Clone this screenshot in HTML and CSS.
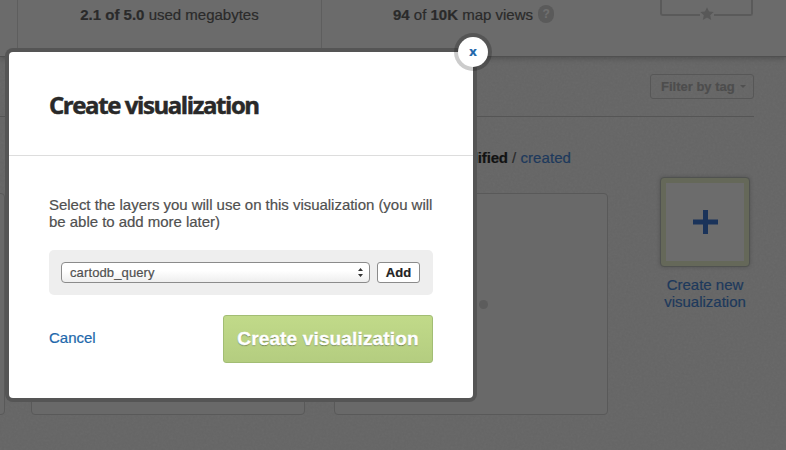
FILE: index.html
```
<!DOCTYPE html>
<html lang="en">
<head>
<meta charset="utf-8">
<title>Create visualization</title>
<link rel="stylesheet" href="styles.css">
</head>
<body>
<div class="page">
  <svg class="grain" aria-hidden="true">
    <filter id="paper"><feTurbulence type="fractalNoise" baseFrequency="0.45" numOctaves="2" seed="4"/><feColorMatrix type="saturate" values="0"/></filter>
    <rect width="100%" height="100%" filter="url(#paper)"/>
  </svg>
  <header class="stats">
    <div class="stat"><span class="used"><b>2.1 of 5.0</b> used megabytes</span></div>
    <div class="stat views"><span class="viewtext"><b>94</b> of <b>10K</b> map views</span><span class="help">?</span></div>
    <div class="plan">
      <div class="badge">
        <svg class="star" viewBox="0 0 18 16"><path class="halo" d="M2 0h14v16H2z"/><path class="shape" d="M9 1.2l2 4.3 4.7.5-3.5 3.2 1 4.7L9 11.5l-4.2 2.4 1-4.7L2.300 6l4.700-.5z"/></svg>
      </div>
    </div>
  </header>
  <main class="content">
    <div class="toolbar"><span class="filter">Filter by tag<i class="caret"></i></span></div>
    <div class="order"><span>Order by <b>modified</b> / <a>created</a></span></div>
    <div class="grid">
      <div class="card"></div>
      <div class="card"></div>
      <div class="card"><span class="dots"><i></i><i></i><i></i></span></div>
      <div class="new">
        <div class="tile"><svg viewBox="0 0 25 24"><path d="M0 9.500h10V0h5v9.500h10v5H15V24h-5v-9.500H0z"/></svg></div>
        <a class="newtext">Create new<br>visualization</a>
      </div>
    </div>
  </main>
</div>
<section class="modal">
  <span class="close">x</span>
  <div class="head"><h1>Create visualization</h1></div>
  <div class="body">
    <p>Select the layers you will use on this visualization (you will<br>be able to add more later)</p>
    <div class="picker">
      <div class="select"><span>cartodb_query</span><svg viewBox="0 0 5 9"><path d="M0 3L2.500 0 5 3zM0 6h5L2.500 9z"/></svg></div>
      <div class="add">Add</div>
    </div>
    <div class="actions"><a class="cancel">Cancel</a><div class="submit"><span>Create visualization</span></div></div>
  </div>
</section>
</body>
</html>
```
FILE: styles.css
```
* { box-sizing: border-box; }
body { margin: 0; width: 786px; height: 450px; overflow: hidden; position: relative; font: 15px/17px "Liberation Sans", Arial, sans-serif; -webkit-text-stroke: .2px; background: #656565; color: #2a2a2a; }
.page { position: relative; height: 450px; overflow: hidden; }
.grain { position: absolute; inset: 0; width: 100%; height: 100%; opacity: .05; }
.stats { position: relative; height: 57px; display: flex; padding-left: 17px; background: #6b6b6b; border-bottom: 1px solid #505050; box-shadow: 0 1px 6px rgba(0,0,0,.25); }
.stat { width: 304px; border-left: 1px solid #5e5e5e; padding-top: 6px; text-align: center; white-space: nowrap; }
.views { display: flex; justify-content: center; gap: 5px; }
.help { width: 16px; height: 18px; margin-top: -1px; border-radius: 9px; background: #5a5a5a; color: #6f6f6f; font: bold 12px/18px "Liberation Sans", Arial, sans-serif; }
.plan { padding-left: 35px; }
.badge { width: 93px; height: 16px; border: 2px solid #5a5a5a; border-top: 0; border-radius: 0 0 3px 3px; display: flex; justify-content: center; }
.star { width: 18px; height: 16px; margin-top: 6px; flex: none; }
.halo { fill: #6b6b6b; }
.shape { fill: #585858; }
.content { position: relative; }
.toolbar { width: 754px; height: 60px; padding-top: 17px; display: flex; justify-content: flex-end; border-bottom: 1px solid #555; }
.filter { width: 104px; height: 25px; border: 1px solid #575757; border-radius: 3px; padding-left: 10px; font-size: 13px; line-height: 24px; font-weight: bold; color: #4d4d4d; display: flex; align-items: center; gap: 5px; white-space: nowrap; }
.caret { border: 3px solid transparent; border-top-color: #505050; border-bottom: 0; }
.order { width: 571px; height: 76px; padding-top: 32px; text-align: right; }
.order b { color: #121212; letter-spacing: -.15px; }
.order a { letter-spacing: .08px; }
a { color: #1d395c; }
.grid { display: flex; margin-left: -269px; }
.card { flex: none; width: 274px; height: 222px; border: 1px solid #595959; border-radius: 4px; background: #696969; margin-right: 26px; display: flex; justify-content: center; align-items: center; }
.card:nth-child(2) { margin-right: 29px; }
.card:nth-child(3) { margin-right: 0; }
.dots { display: flex; gap: 3px; }
.dots i { width: 9px; height: 9px; border-radius: 50%; background: #5c5c5c; }
.new { width: 92px; margin: -16px 0 0 52px; text-align: center; }
.tile { width: 90px; height: 90px; border: 1px solid #505250; border-radius: 4px; background: #656859; box-shadow: 0 0 4px rgba(0,0,0,.2); display: flex; align-items: center; justify-content: center; }
.tile svg { width: 78px; height: 78px; padding: 27px 26px 27px 27px; background: #6c6c6c; fill: #1a335a; }
.newtext { display: block; margin: 9px 1px 0 -1px; }
.modal { position: absolute; left: 9px; top: 52px; width: 464px; height: 346px; background: #fff; border-radius: 4px; box-shadow: 0 0 0 4px #555; }
.close { position: absolute; top: -15px; right: -15px; width: 30px; height: 30px; border-radius: 50%; background: #fff; box-shadow: 0 0 0 4px rgba(0,0,0,.2); text-align: center; font: bold 13px/28px "Open Sans", sans-serif; color: #2167ab; }
.head { height: 104px; padding: 37px 40px 0; border-bottom: 1px solid #ddd; }
h1 { margin: 0; font: bold 24px/32px "Open Sans", sans-serif; letter-spacing: -1.42px; -webkit-text-stroke: .5px; color: #292929; white-space: nowrap; }
.body { padding: 40px 40px 0; color: #505050; }
p { margin: 0; white-space: nowrap; letter-spacing: -.03px; }
.picker { height: 45px; margin-top: 20px; padding: 12px; border-radius: 5px; background: #eee; display: flex; gap: 7px; }
.select { width: 309px; height: 21px; padding: 0 6px 0 8px; border: 1px solid #8b8b8b; border-radius: 4px; background: linear-gradient(#fff 40%, #eee); display: flex; align-items: center; justify-content: space-between; font-size: 13px; line-height: 19px; letter-spacing: .12px; }
.select svg { width: 5px; height: 9px; fill: #333; }
.add { width: 43px; height: 21px; border: 1px solid #8b8b8b; border-radius: 3px; background: #fff; color: #222; font-size: 13px; font-weight: bold; line-height: 19px; text-align: center; }
.actions { margin-top: 20px; display: flex; justify-content: space-between; }
.cancel { margin-top: 14px; color: #2167ab; }
.submit { width: 210px; height: 48px; border: 1px solid #a2bd74; border-radius: 3px; background: linear-gradient(#c1da89, #b4cd80); color: #fff; font-size: 19px; letter-spacing: .15px; -webkit-text-stroke: .4px; font-weight: bold; line-height: 46px; text-align: center; text-shadow: 0 1px 1px rgba(0,0,0,.4); white-space: nowrap; }
```
